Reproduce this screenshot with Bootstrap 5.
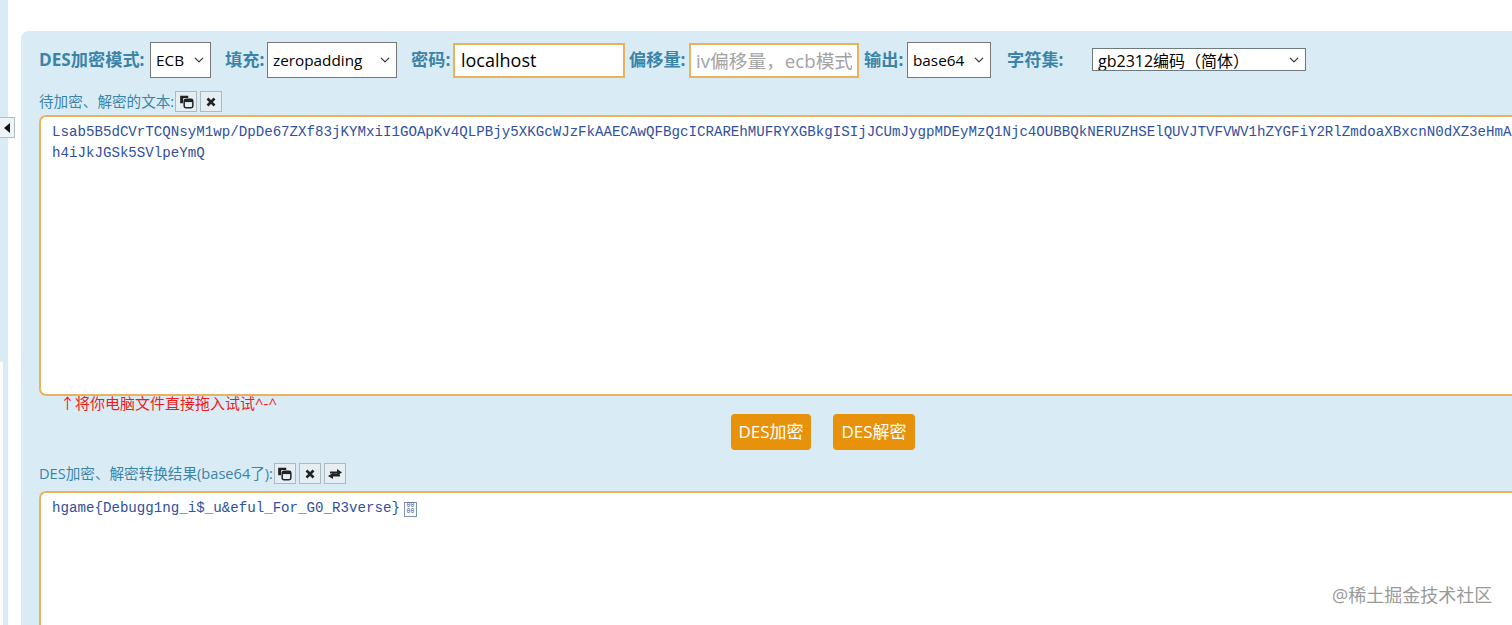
<!DOCTYPE html>
<html lang="zh">
<head>
<meta charset="utf-8">
<title>DES</title>
<link href="https://cdn.jsdelivr.net/npm/bootstrap@5.3.0/dist/css/bootstrap.min.css" rel="stylesheet">
<style>
html,body{height:625px;overflow:hidden;background:#fff}
body{font-family:"Open Sans","Noto Sans CJK SC",sans-serif;color:#3b84a8}
.page-wrap{height:625px;width:1512px;overflow:hidden;position:relative}
.strip-col{width:8px;flex:none}
.strip-top{height:362px;background:#d9ecf6}
.strip-bottom{margin-left:3px;height:263px;background:#d9ecf6}
.collapse-btn{position:absolute;left:0;top:117px;width:15px;height:21px;background:#eef3f5;border:1px solid #b5bcc0;border-left:0;display:flex;align-items:center;justify-content:center}
.main-panel{margin:31px 0 0 13px;padding:11px 0 0 18px;background:#d9ecf6;border-radius:8px 0 0 0;flex:1;min-width:0;height:594px;overflow:hidden}
.tool-row{height:36px;width:1300px}
.lab-b{font-weight:700;font-size:17.2px;white-space:nowrap;line-height:36px;color:#3b84a8;flex:none}
.lab-1{width:111px}.lab-2{width:42px}.lab-3{width:42px}.lab-4{width:60px}.lab-5{width:43px}.lab-6{width:85px}
.sel-x{border-radius:0;border:1px solid #767676;height:36px;font-size:15.3px;font-family:"Open Sans","Noto Sans CJK SC",sans-serif;color:#000;padding:0 0 0 5px;background-position:right 5px center;background-size:12px 10px;flex:none;box-shadow:none}
.sel-a{width:61px;margin-right:14px}
.sel-b{width:130px;margin-right:14px}
.sel-c{width:84px;margin-right:16px}
.sel-d{width:214px;height:23px;margin-bottom:1px;border-color:#6d7a80;font-size:16px}
.inp-x{border:2px solid #eab25c;height:35px;border-radius:0;padding:0 6px;flex:none;margin-right:4px;color:#000;background:#fff;outline:0}
.inp-key{width:172px;font-size:18px}
.inp-iv{width:170px;font-size:18.7px;padding:0 5px;margin-right:5px}
.inp-iv::placeholder{color:#a3a3a3;opacity:1}
.lab-s{font-size:14.6px;line-height:21px;height:21px;white-space:nowrap}
.ibtn{width:22px;height:21px;background:#e4eef3;border:1px solid #aeb9bf;display:inline-flex;align-items:center;justify-content:center;padding:0;margin-left:3px;flex:none}
.ibtn-first{margin-left:1px}
.txt-box{width:1500px;border:2px solid #eab25c;border-radius:7px;background:#fff;padding:5px 11px;font-family:"Liberation Mono",monospace;font-size:14.15px;line-height:21px;color:#31509f;white-space:nowrap}
.box-a{height:281px;margin-top:3px}
.box-b{height:200px;margin-top:7px}
.red-tip{color:#f01a1a;font-size:15px;line-height:14px;margin-left:21px;height:18px}
.act-row{width:876px;height:36px;gap:22px}
.act-btn{background:#e8920c;color:#fff;border:0;border-radius:4px;height:36px;font-size:17px;padding:0;font-family:"Open Sans","Noto Sans CJK SC",sans-serif}
.w-a{width:80px}.w-b{width:82px}
.tofu{display:inline-block;width:13px;height:15px;border:1px solid #7d90b8;font-size:6.5px;line-height:6.5px;text-align:center;vertical-align:-1px;font-family:"Liberation Mono",monospace}
.sec-gap{margin-top:13px}
.water-mk{position:absolute;left:1332px;top:584px;font-size:18px;line-height:22px;color:#9a9a9a;white-space:nowrap}
</style>
</head>
<body>
<div class="page-wrap d-flex">
  <div class="strip-col">
    <div class="strip-top"></div>
    <div class="strip-bottom"></div>
  </div>
  <div class="collapse-btn"><svg width="7" height="10" viewBox="0 0 7 10"><path d="M6 0V10L0 5Z" fill="#111"/></svg></div>
  <div class="main-panel">
    <div class="tool-row d-flex align-items-center">
      <span class="lab-b lab-1">DES加密模式:</span>
      <select class="form-select sel-x sel-a"><option>ECB</option></select>
      <span class="lab-b lab-2">填充:</span>
      <select class="form-select sel-x sel-b"><option>zeropadding</option></select>
      <span class="lab-b lab-3">密码:</span>
      <input class="inp-x inp-key" value="localhost">
      <span class="lab-b lab-4">偏移量:</span>
      <input class="inp-x inp-iv" placeholder="iv偏移量，ecb模式">
      <span class="lab-b lab-5">输出:</span>
      <select class="form-select sel-x sel-c"><option>base64</option></select>
      <span class="lab-b lab-6">字符集:</span>
      <select class="form-select sel-x sel-d"><option>gb2312编码（简体）</option></select>
    </div>
    <div class="d-flex align-items-center sec-gap">
      <span class="lab-s">待加密、解密的文本:</span>
      <button class="ibtn ibtn-first"><svg width="15" height="15" viewBox="0 0 13 13"><path d="M1 1.500h7v2H4.500A1 1 0 0 0 3.500 4.500V8H1Z" fill="#222"/><rect x="4.500" y="4.500" width="7.500" height="7.500" rx="1.500" fill="none" stroke="#222" stroke-width="1.300"/><rect x="4.500" y="4.500" width="7.500" height="2.500" fill="#222"/></svg></button>
      <button class="ibtn"><svg width="10" height="10" viewBox="0 0 10 10"><path d="M1.500 1.500l7 7M8.500 1.500l-7 7" stroke="#222" stroke-width="2.600"/></svg></button>
    </div>
    <div class="txt-box box-a">Lsab5B5dCVrTCQNsyM1wp/DpDe67ZXf83jKYMxiI1GOApKv4QLPBjy5XKGcWJzFkAAECAwQFBgcICRAREhMUFRYXGBkgISIjJCUmJygpMDEyMzQ1Njc4OUBBQkNERUZHSElQUVJTVFVWV1hZYGFiY2RlZmdoaXBxcnN0dXZ3eHmA<br>h4iJkJGSk5SVlpeYmQ</div>
    <div class="red-tip">↑将你电脑文件直接拖入试试^-^</div>
    <div class="act-row d-flex justify-content-end">
      <button class="act-btn w-a">DES加密</button>
      <button class="act-btn w-b">DES解密</button>
    </div>
    <div class="d-flex align-items-center sec-gap">
      <span class="lab-s">DES加密、解密转换结果(base64了):</span>
      <button class="ibtn ibtn-first"><svg width="15" height="15" viewBox="0 0 13 13"><path d="M1 1.500h7v2H4.500A1 1 0 0 0 3.500 4.500V8H1Z" fill="#222"/><rect x="4.500" y="4.500" width="7.500" height="7.500" rx="1.500" fill="none" stroke="#222" stroke-width="1.300"/><rect x="4.500" y="4.500" width="7.500" height="2.500" fill="#222"/></svg></button>
      <button class="ibtn"><svg width="10" height="10" viewBox="0 0 10 10"><path d="M1.500 1.500l7 7M8.500 1.500l-7 7" stroke="#222" stroke-width="2.600"/></svg></button>
      <button class="ibtn"><svg width="16" height="12" viewBox="0 0 16 12"><path d="M3 3.500h7V1l5 3.500-5 3V5.500H3Z" fill="#222"/><path d="M13 6.500v2H6V11L1 8l5-3" fill="#222"/></svg></button>
    </div>
    <div class="txt-box box-b">hgame{Debugg1ng_i$_u&amp;eful_For_G0_R3verse}<span class="tofu ms-1">00<br>00</span></div>
  </div>
  <div class="water-mk">@稀土掘金技术社区</div>
</div>
<script src="https://cdn.jsdelivr.net/npm/bootstrap@5.3.0/dist/js/bootstrap.bundle.min.js"></script>
</body>
</html>
